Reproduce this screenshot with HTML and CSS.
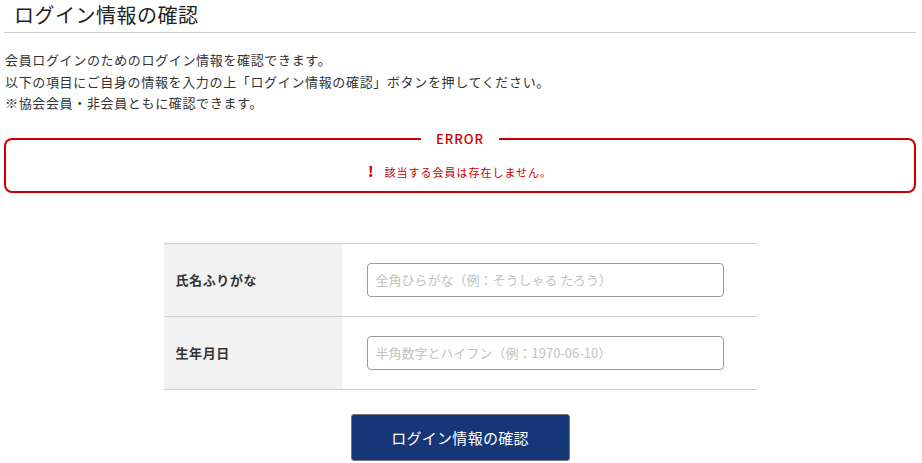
FILE: index.html
```html
<!DOCTYPE html>
<html lang="ja">
<head>
<meta charset="UTF-8" />
<meta name="viewport" content="width=device-width, initial-scale=1" />
<title>ログイン情報の確認</title>
<link rel="stylesheet" href="styles.css">
</head>
<body>

<main class="page">
  <h1 class="page-title">ログイン情報の確認</h1>

  <div class="intro">
    <p>会員ログインのためのログイン情報を確認できます。</p>
    <p>以下の項目にご自身の情報を入力の上「ログイン情報の確認」ボタンを押してください。</p>
    <p>※協会会員・非会員ともに確認できます。</p>
  </div>

  <fieldset class="error-box">
    <legend>ERROR</legend>
    <p class="error-msg"><span class="error-mark">!</span>該当する会員は存在しません。</p>
  </fieldset>

  <form class="check-form" onsubmit="return false;">
    <table class="form-table">
      <tr>
        <th>氏名ふりがな</th>
        <td><input type="text" class="text-input" placeholder="全角ひらがな（例：そうしゃる たろう）" /></td>
      </tr>
      <tr>
        <th>生年月日</th>
        <td><input type="text" class="text-input" placeholder="半角数字とハイフン（例：1970-06-10）" /></td>
      </tr>
    </table>

    <div class="actions">
      <button type="submit" class="submit-btn">ログイン情報の確認</button>
    </div>
  </form>
</main>

</body>
</html>
```

FILE: styles.css
```css
body {
  margin: 0;
  padding: 0 6px 0 4px;
  font-family: "Noto Sans CJK JP", "Noto Sans", sans-serif;
  color: #333;
  background: #fff;
}
.page {
  display: flex;
  flex-direction: column;
}
.page-title {
  margin: 0;
  padding: 0 0 0 10px;
  height: 32px;
  line-height: 30px;
  font-size: 20px;
  font-weight: 400;
  color: #222;
  letter-spacing: 0.5px;
  border-bottom: 1px solid #d0d0d0;
}
.intro {
  padding: 16px 0 0 1px;
  font-size: 13px;
  letter-spacing: 0.65px;
  line-height: 21.5px;
}
.intro p {
  margin: 0;
}

/* error message */
.error-box {
  margin: 15px 0 0;
  padding: 12px 10px 9px;
  border: 2px solid #cc0000;
  border-radius: 8px;
  text-align: center;
}
.error-box legend {
  padding: 0 15px;
  font-size: 13px;
  font-weight: 500;
  line-height: 20px;
  letter-spacing: 1px;
  color: #cc0000;
}
.error-msg {
  margin: 0;
  font-size: 11px;
  line-height: 20px;
  letter-spacing: 1px;
  color: #cc0000;
}
.error-mark {
  display: inline-block;
  margin-right: 10px;
  font-size: 14px;
  font-weight: 900;
}

/* form */
.check-form {
  margin-top: 50px;
  display: flex;
  flex-direction: column;
  align-items: center;
}
.form-table {
  width: 593px;
  border-collapse: collapse;
}
.form-table tr {
  border-top: 1px solid #cfcfcf;
  border-bottom: 1px solid #cfcfcf;
}
.form-table th {
  width: 178px;
  height: 73px;
  padding: 0 0 0 12px;
  box-sizing: border-box;
  background: #f2f2f2;
  text-align: left;
  font-size: 13px;
  font-weight: 700;
  letter-spacing: 0.6px;
  color: #333;
}
.form-table td {
  padding: 0 0 0 25px;
}
.text-input {
  display: block;
  width: 357px;
  height: 34px;
  box-sizing: border-box;
  padding: 0 8px;
  border: 1px solid #999;
  border-radius: 4px;
  font-family: inherit;
  font-size: 13px;
  color: #333;
}
.text-input::placeholder {
  color: #c2c2c2;
}
.actions {
  margin-top: 24px;
}
.submit-btn {
  width: 219px;
  height: 47px;
  background: #173677;
  border: 1px solid #777;
  border-radius: 3px;
  color: #fff;
  font-family: inherit;
  font-size: 15px;
  letter-spacing: 0.3px;
  cursor: pointer;
}
```
